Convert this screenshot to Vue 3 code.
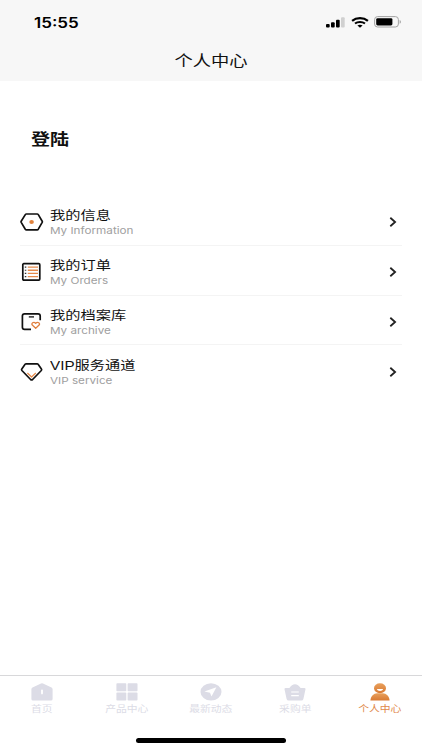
<script setup>
import { ref } from 'vue'

// 菜单列表
const menus = ref([
  { icon: 'info', name: '我的信息', en: 'My Information' },
  { icon: 'order', name: '我的订单', en: 'My Orders' },
  { icon: 'archive', name: '我的档案库', en: 'My archive' },
  { icon: 'vip', name: 'VIP服务通道', en: 'VIP service' }
])

// 底部导航
const tabs = ref([
  { icon: 'home', name: '首页' },
  { icon: 'product', name: '产品中心' },
  { icon: 'news', name: '最新动态' },
  { icon: 'cart', name: '采购单' },
  { icon: 'user', name: '个人中心' }
])

const current = ref('user')
</script>

<template>
  <div class="page">
    <header class="header">
      <div class="status">
        <span class="status__time wide">15:55</span>
        <div class="status__icons">
          <svg width="19" height="11" viewBox="0 0 19 11">
            <rect x="0" y="7" width="3.7" height="3.6" rx="1" />
            <rect x="5" y="5.2" width="3.7" height="5.4" rx="1" />
            <rect x="10" y="2.8" width="3.7" height="7.8" rx="1" />
            <rect x="15" y="0.3" width="3.7" height="10.3" rx="1" fill="#d0d0d0" />
          </svg>
          <svg class="status__wifi" width="18" height="11" viewBox="0 0 18 11" fill="none" stroke="#000">
            <path d="M1.1 3.8C5.5 0.2 12.5 0.2 16.9 3.8" stroke-width="2.2" />
            <path d="M4 6.6C6.8 4.3 11.2 4.3 14 6.6" stroke-width="2" />
            <path d="M6.4 8.6C8 7.3 10 7.3 11.6 8.6L9 10.8Z" fill="#000" stroke="none" />
          </svg>
          <svg class="status__battery" width="28" height="12" viewBox="0 0 28 12">
            <rect x="0.6" y="0.6" width="23.8" height="10.4" rx="3" fill="none" stroke="#a2a2a2" />
            <rect x="2.2" y="2.2" width="16.2" height="7.2" rx="1.4" />
            <path d="M25.7 4V7.8C27.2 7.2 27.2 4.6 25.7 4Z" fill="#999" />
          </svg>
        </div>
      </div>
      <h1 class="header__title"><span class="wide">个人中心</span></h1>
    </header>

    <main class="main">
      <h2 class="login"><span class="wide">登陆</span></h2>
      <ul class="menu">
        <li v-for="item in menus" :key="item.icon" class="menu__item">
          <svg class="menu__icon" width="24" height="22" viewBox="0 0 24 22" fill="none" stroke="#111" stroke-width="1.7" stroke-linejoin="round">
            <template v-if="item.icon === 'info'">
              <path d="M6.4 3H17.2Q17.9 3 18.3 3.6L22.2 10.2Q22.5 10.8 22.2 11.4L18.3 18.2Q17.9 18.8 17.2 18.8H6.4Q5.7 18.8 5.3 18.2L1.2 11.4Q0.9 10.8 1.2 10.2L5.3 3.6Q5.7 3 6.4 3Z" />
              <ellipse cx="11.6" cy="10.9" rx="2.3" ry="2" fill="#e0823d" stroke="none" />
            </template>
            <template v-else-if="item.icon === 'order'">
              <rect x="2.8" y="2.7" width="17" height="16.4" rx="1" />
              <path d="M7.8 6.1H18M7.8 9.2H18M7.8 12.4H18M7.8 15.6H18" stroke="#e58a4b" stroke-width="1.4" />
              <path d="M4.8 6.1H6.3M4.8 9.2H6.3M4.8 12.4H6.3M4.8 15.6H6.3" stroke="#333" stroke-width="1.1" />
            </template>
            <template v-else-if="item.icon === 'archive'">
              <path d="M20.2 9.2V5Q20.2 2.9 18 2.9H4.6Q2.4 2.9 2.4 5V16.2Q2.4 18.3 4.6 18.3H11" />
              <path d="M8.8 5.9H14" stroke-width="1.3" />
              <path d="M15.7 17.2L12.3 14.1C10.8 12.5 13.6 10.2 15.7 12.3C17.8 10.2 20.6 12.5 19.1 14.1Z" stroke="#e07f3e" stroke-width="1.3" />
            </template>
            <template v-else>
              <path d="M6.1 2.8H17.1Q17.7 2.8 18.1 3.3L21.4 7.9Q22 8.7 21.3 9.5L12.6 18.5Q11.6 19.4 10.6 18.5L1.9 9.5Q1.2 8.7 1.8 7.9L5.1 3.3Q5.5 2.8 6.1 2.8Z" />
              <path d="M7.4 12L11.6 16L15.8 12" stroke="#e68a4b" stroke-width="1.2" />
            </template>
          </svg>
          <div class="menu__text">
            <p class="menu__name"><span class="wide">{{ item.name }}</span></p>
            <p class="menu__en"><span class="wide">{{ item.en }}</span></p>
          </div>
          <svg class="menu__arrow" width="8" height="10" viewBox="0 0 8 10" fill="none" stroke="#222" stroke-width="1.8">
            <path d="M1.3 0.8L6.1 5L1.3 9.2" />
          </svg>
        </li>
      </ul>
    </main>

    <footer class="tabbar">
      <div
        v-for="tab in tabs"
        :key="tab.icon"
        class="tabbar__item"
        :class="{ 'tabbar__item--active': current === tab.icon }"
        @click="current = tab.icon"
      >
        <svg width="24" height="18" viewBox="0 0 24 18" fill="currentColor">
          <template v-if="tab.icon === 'home'">
            <path d="M11 0.5Q12 0 13 0.5L21.5 4.6Q22.6 5.2 22.6 6.3V16Q22.6 17.5 21 17.5H3Q1.4 17.5 1.4 16V6.3Q1.4 5.2 2.5 4.6Z" />
            <rect x="11.1" y="6.4" width="1.8" height="5" rx="0.8" fill="#fff" />
          </template>
          <template v-else-if="tab.icon === 'product'">
            <rect x="1.4" y="0.3" width="9.9" height="8" rx="0.8" />
            <rect x="12.6" y="0.3" width="9.9" height="8" rx="0.8" />
            <rect x="1.4" y="9.6" width="9.9" height="8" rx="0.8" />
            <rect x="12.6" y="9.6" width="9.9" height="8" rx="0.8" />
          </template>
          <template v-else-if="tab.icon === 'news'">
            <ellipse cx="12" cy="8.9" rx="10.5" ry="8.7" />
            <path d="M17.4 4.2L5.4 8.5L11 9.7L12.5 13.6Z" fill="#fff" />
          </template>
          <template v-else-if="tab.icon === 'cart'">
            <path d="M6.4 5C7.8 2.8 10 1.2 12 1.2C14 1.2 16.2 2.8 17.6 5H21.2Q22.8 5 22.5 6.3L20.4 16Q20 17.5 18.4 17.5H5.6Q4 17.5 3.6 16L1.5 6.3Q1.2 5 2.8 5Z" />
            <path d="M8.2 9H15.8M8.2 12.6H15.8" fill="none" stroke="#fff" stroke-width="1.2" />
          </template>
          <template v-else>
            <defs>
              <linearGradient id="userFill" x1="0" y1="0" x2="0" y2="1">
                <stop offset="0" stop-color="#e8a05c" />
                <stop offset="1" stop-color="#d97932" />
              </linearGradient>
            </defs>
            <ellipse cx="12" cy="5.2" rx="6" ry="5" fill="url(#userFill)" />
            <path d="M2.4 17.6C2.6 12.6 6 10.6 9 10.2H15C18 10.6 21.4 12.6 21.6 17.6Z" fill="url(#userFill)" />
            <path d="M8.8 6.1H15.2C14.6 8.7 9.4 8.7 8.8 6.1Z" fill="#fff" />
          </template>
        </svg>
        <span class="tabbar__name wide">{{ tab.name }}</span>
      </div>
      <div class="home-bar"></div>
    </footer>
  </div>
</template>

<style>
body {
  background: #fff;
}
</style>

<style scoped>
.page {
  display: flex;
  flex-direction: column;
  height: 750px;
  background: #fff;
  color: #111;
  font-family: Inter, "Noto Sans CJK SC", sans-serif;
}

h1, h2, p, ul {
  margin: 0;
  padding: 0;
  font-weight: normal;
}

/* 横向加宽的文字 */
.wide {
  display: inline-block;
  transform: scaleX(1.218);
  transform-origin: left center;
  white-space: nowrap;
}

/* 头部 */
.header {
  height: 81px;
  background: #f7f7f7;
}

.status {
  display: flex;
  align-items: center;
  justify-content: space-between;
  height: 44px;
  padding: 0 20px 0 34px;
}

.status__time {
  font-size: 14px;
  font-weight: 600;
  color: #000;
}

.status__icons {
  display: flex;
  align-items: center;
}

.status__wifi {
  margin-left: 6px;
}

.status__battery {
  margin-left: 5px;
}

.header__title {
  font-size: 15px;
  line-height: 34px;
  text-align: center;
}

.header__title .wide {
  transform-origin: center;
}

/* 内容 */
.main {
  flex: 1;
}

.login {
  padding: 47px 0 0 31px;
  font-size: 15.6px;
  line-height: 24px;
}

.login .wide {
  font-weight: 700;
}

.menu {
  margin: 44px 20px 0;
  list-style: none;
}

.menu__item {
  display: flex;
  align-items: center;
  box-sizing: border-box;
  height: 49.8px;
  padding-top: 4px;
  border-bottom: 1px solid #f4f4f4;
}

.menu__item:last-child {
  border-bottom: none;
}

.menu__text {
  flex: 1;
  margin-top: 2px;
  margin-left: 6px;
}

.menu__name {
  font-family: "Liberation Sans", "Noto Sans CJK SC", sans-serif;
  font-size: 12.5px;
  line-height: 16px;
}

.menu__en {
  font-size: 9.6px;
  line-height: 14px;
  color: #a0a0a0;
}

.menu__arrow {
  margin-right: 5px;
}

/* 底部导航 */
.tabbar {
  position: relative;
  display: flex;
  box-sizing: border-box;
  height: 75px;
  padding-top: 7px;
  border-top: 1px solid #d8d8da;
}

.tabbar__item {
  flex: 1;
  display: flex;
  flex-direction: column;
  align-items: center;
  color: #dcdce6;
}

.tabbar__name {
  margin-top: 1px;
  font-size: 8.9px;
  line-height: 13px;
  transform-origin: center;
}

.tabbar__item--active {
  color: #df8a4c;
}

.home-bar {
  position: absolute;
  left: 50%;
  bottom: 7px;
  width: 150px;
  height: 5px;
  margin-left: -75px;
  border-radius: 3px;
  background: #000;
}
</style>
